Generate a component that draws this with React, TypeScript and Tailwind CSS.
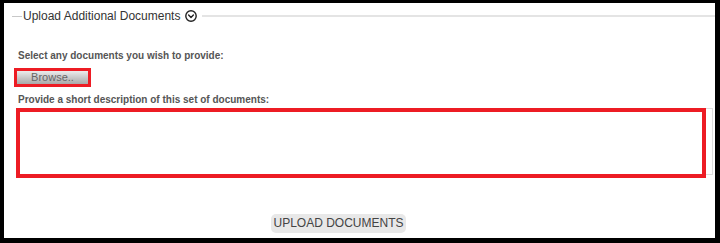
import React from 'react';

export default function App() {
    return (
        <div className="w-[720px] h-[243px] bg-black pt-[3px] pl-[4px] pr-[5px] pb-[5px]">
            <div className="h-full bg-white font-['Liberation_Sans',Arial,sans-serif]">
                {/* legend row */}
                <div className="flex items-center pt-[6px] pl-[8px]">
                    <div className="shrink-0 w-[10px] h-px bg-[#c8c8c8]" />
                    <span className="shrink-0 ml-px text-[12px] leading-[14px] text-[#333]">Upload Additional Documents</span>
                    <svg width="12" height="12" viewBox="0 0 12 12" className="shrink-0 ml-[5px]" fill="none" stroke="#222" strokeWidth="1.4">
                        <circle cx="6" cy="6" r="5.2" />
                        <path d="M3.6 5 L6 7.4 L8.4 5" strokeLinecap="round" strokeLinejoin="round" />
                    </svg>
                    <div className="ml-[5px] flex-1 h-[2px] bg-[#e4e4e4]" />
                </div>

                <div className="flex flex-col items-start pl-[14px] pr-[2px]">
                    <p className="mt-[27px] text-[10px] leading-[12px] font-bold text-[#555]">
                        Select any documents you wish to provide:
                    </p>

                    <div className="relative mt-[9px] -ml-px flex">
                        <button className="block w-[71px] h-[13px] bg-gradient-to-b from-[#ececec] to-[#a9a9a9] text-[11px] leading-[13px] text-[#666]">
                            Browse..
                        </button>
                        <div className="absolute -inset-[3px] border-[3px] border-[#ed1c24]" />
                    </div>

                    <p className="mt-[10px] text-[10px] leading-[12px] font-bold text-[#555]">
                        Provide a short description of this set of documents:
                    </p>

                    <div className="relative mt-[2px] self-stretch flex">
                        <textarea className="block w-full h-[67px] border border-[#ddd] resize-none outline-none" />
                        <div className="absolute left-[-2px] top-0 w-[690px] h-[70px] border-[4px] border-[#ed1c24]" />
                    </div>

                    <button className="block mt-[39px] ml-[253px] w-[135px] h-[19px] rounded-[5px] bg-[#e8e8e8] text-[12px] leading-[19px] text-[#444]">
                        UPLOAD DOCUMENTS
                    </button>
                </div>
            </div>
        </div>
    );
}
